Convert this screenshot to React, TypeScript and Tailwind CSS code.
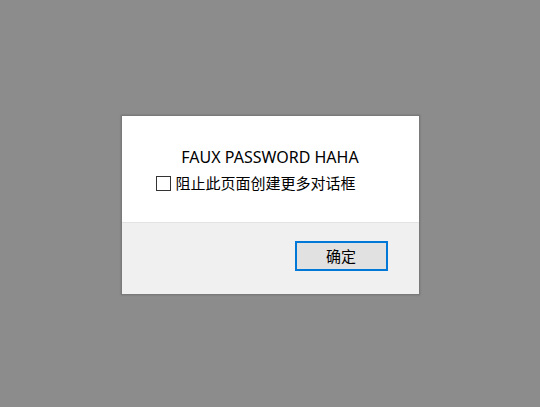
const App = () => {
  return (
    <div className="flex h-[407px] w-[540px] justify-center bg-[#8c8c8c] pt-[115px] font-['Segoe_UI','Noto_Sans','Noto_Sans_CJK_SC',sans-serif] text-black">
      <div className="flex h-[180px] w-[299px] flex-col border border-[#7a7a7a] bg-white shadow-[0_0_2px_rgba(0,0,0,0.2)]">
        <div className="h-[107px] border-b border-[#e3e3e3]">
          <p className="mt-[31px] text-center text-[16px] leading-[20px]">FAUX PASSWORD HAHA</p>
          <label className="mt-[6px] ml-[34px] flex items-center gap-[5px] text-[15px] leading-[20px]">
            <span className="inline-block h-[15px] w-[15px] border border-[#333333] bg-white" />
            <span>阻止此页面创建更多对话框</span>
          </label>
        </div>
        <div className="flex flex-1 justify-end bg-[#f0f0f0] pt-[18px] pr-[31px]">
          <button className="h-[30px] w-[93px] border-2 border-[#0078d7] bg-[#e1e1e1] text-[15px] leading-none">
            确定
          </button>
        </div>
      </div>
    </div>
  )
}

export default App
